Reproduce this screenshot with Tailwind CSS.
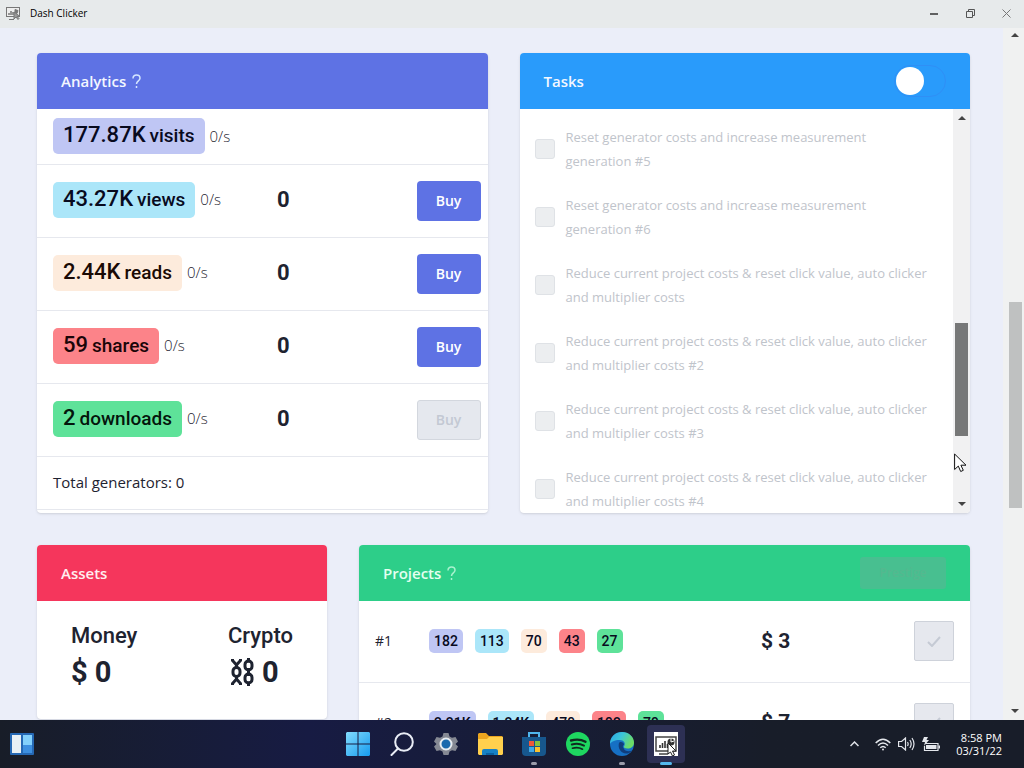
<!DOCTYPE html>
<html lang="en">
<head>
<meta charset="utf-8">
<meta name="viewport" content="width=device-width, initial-scale=1">
<title>Dash Clicker</title>
<script src="https://cdn.jsdelivr.net/npm/@tailwindcss/browser@4"></script>
</head>
<body class="flex h-screen flex-col overflow-hidden bg-[#ebeef9] font-['Open_Sans',sans-serif] text-[#1e2330]">

<!-- Window title bar -->
<header class="flex h-7 shrink-0 items-center bg-[#e7eaeb] pb-px pl-[6px]">
  <svg class="h-[13px] w-[15px]" viewBox="0 0 15 13" fill="none" stroke="#777" aria-hidden="true"><rect x=".5" y=".5" width="13" height="9" fill="#eee"/><path d="M3 8V6M5 8V4M7 8V5" stroke-width="1.5"/><path d="M3 12.5h5M9 2.500l3 1-1 3-2-1z" fill="#777"/><path d="M8 5v7l2-2 2 2.500 1-1-2-2h3z" fill="#999"/></svg>
  <h1 class="ml-[9px] text-[10px] text-black">Dash Clicker</h1>
  <div class="ml-auto flex">
    <button class="flex h-7 w-9 items-center justify-center" aria-label="Minimize"><svg width="10" height="10" viewBox="0 0 10 10" stroke="#333" stroke-width="1.500"><path d="M1 5h8"/></svg></button>
    <button class="flex h-7 w-9 items-center justify-center" aria-label="Restore"><svg width="9" height="9" viewBox="0 0 9 9" fill="none" stroke="#555"><path d="M.5 2.500h6v6h-6zM2.500 2.500v-2h6v6h-2"/></svg></button>
    <button class="flex h-7 w-9 items-center justify-center" aria-label="Close"><svg width="9" height="9" viewBox="0 0 9 9" stroke="#777"><path d="M.5.5l8 8M8.500.5l-8 8"/></svg></button>
  </div>
</header>

<div class="flex min-h-0 flex-1">
  <main class="min-w-0 flex-1 overflow-hidden pt-[25px] pr-[33px] pl-[37px]">
    <div class="grid grid-cols-2 gap-8">

      <section class="flex h-[460px] flex-col overflow-hidden rounded-[4px] bg-white shadow-sm">
        <h2 class="flex h-14 shrink-0 items-center gap-[6px] bg-[#5e72e4] px-6 text-[15px] font-semibold text-[#f3f7ff]">Analytics
          <svg width="9" height="15" viewBox="0 0 9 15" fill="none" stroke="#d5e6ff" stroke-width="1.500"><path d="M1 4.500C1 2.200 2.500 1 4.500 1S8 2.300 8 4.200C8 6.800 4.500 6.900 4.500 10M4.500 12v2"/></svg>
        </h2>
        <table class="w-full table-fixed border-collapse">
          <colgroup><col class="w-[240px]"><col><col class="w-[80px]"></colgroup>
          <tbody>
            <tr class="h-[55px] border-b border-[#e6e8ee]">
              <td class="pl-4"><div class="flex items-center gap-[5px]"><span class="flex h-9 items-baseline gap-1 rounded-[5px] bg-[#bfc6f4] px-[10px] font-['Roboto'] text-[22px] leading-[34px] font-medium text-[#080a1e]">177.87K <small class="text-[19px] leading-[34px]">visits</small></span><span class="text-[15px] font-light">0/s</span></div></td><td></td><td></td>
            </tr>
            <tr class="h-[73px] border-b border-[#e6e8ee]">
              <td class="pb-[2px] pl-4"><div class="flex items-center gap-[5px]"><span class="flex h-9 items-baseline gap-1 rounded-[5px] bg-[#abe6f9] px-[10px] font-['Roboto'] text-[22px] leading-[34px] font-medium text-[#080a1e]">43.27K <small class="text-[19px] leading-[34px]">views</small></span><span class="text-[15px] font-light">0/s</span></div></td>
              <td class="pb-[2px] font-['Roboto'] text-[22px] font-bold">0</td>
              <td class="pr-[7px] text-right"><button class="h-10 w-16 rounded-[4px] bg-[#5e72e4] text-sm font-semibold text-white">Buy</button></td>
            </tr>
            <tr class="h-[73px] border-b border-[#e6e8ee]">
              <td class="pb-[2px] pl-4"><div class="flex items-center gap-[5px]"><span class="flex h-9 items-baseline gap-1 rounded-[5px] bg-[#fdebdc] px-[10px] font-['Roboto'] text-[22px] leading-[34px] font-medium text-[#1a0a05]">2.44K <small class="text-[19px] leading-[34px]">reads</small></span><span class="text-[15px] font-light">0/s</span></div></td>
              <td class="pb-[2px] font-['Roboto'] text-[22px] font-bold">0</td>
              <td class="pr-[7px] text-right"><button class="h-10 w-16 rounded-[4px] bg-[#5e72e4] text-sm font-semibold text-white">Buy</button></td>
            </tr>
            <tr class="h-[73px] border-b border-[#e6e8ee]">
              <td class="pb-[2px] pl-4"><div class="flex items-center gap-[5px]"><span class="flex h-9 items-baseline gap-1 rounded-[5px] bg-[#fc8389] px-[10px] font-['Roboto'] text-[22px] leading-[34px] font-medium text-[#1a0508]">59 <small class="text-[19px] leading-[34px]">shares</small></span><span class="text-[15px] font-light">0/s</span></div></td>
              <td class="pb-[2px] font-['Roboto'] text-[22px] font-bold">0</td>
              <td class="pr-[7px] text-right"><button class="h-10 w-16 rounded-[4px] bg-[#5e72e4] text-sm font-semibold text-white">Buy</button></td>
            </tr>
            <tr class="h-[73px] border-b border-[#e6e8ee]">
              <td class="pb-[2px] pl-4"><div class="flex items-center gap-[5px]"><span class="flex h-9 items-baseline gap-1 rounded-[5px] bg-[#5ee299] px-[10px] font-['Roboto'] text-[22px] leading-[34px] font-medium text-[#04150c]">2 <small class="text-[19px] leading-[34px]">downloads</small></span><span class="text-[15px] font-light">0/s</span></div></td>
              <td class="pb-[2px] font-['Roboto'] text-[22px] font-bold">0</td>
              <td class="pr-[7px] text-right"><button disabled class="h-10 w-16 rounded-[3px] border border-[#d3d7de] bg-[#e5e8ee] text-sm font-semibold text-[#c3c8d3]">Buy</button></td>
            </tr>
            <tr class="h-[53px] border-b border-[#e6e8ee]"><td colspan="3" class="pl-4 text-[15px]">Total generators: 0</td></tr>
          </tbody>
        </table>
      </section>

      <section class="flex h-[460px] flex-col overflow-hidden rounded-[4px] bg-white shadow-sm">
        <div class="flex h-14 shrink-0 items-center justify-between bg-[#299bfb] px-6">
          <h2 class="text-[15px] font-semibold text-[#f3f7ff]">Tasks</h2>
          <input type="checkbox" role="switch" aria-label="Hide completed tasks" class="h-8 w-[52px] appearance-none rounded-full border border-[#2f8ff6] p-px before:block before:size-7 before:rounded-full before:bg-white before:content-['']">
        </div>
        <div class="flex min-h-0 flex-1">
          <ul class="flex min-w-0 flex-1 flex-col gap-5 overflow-hidden pt-4 pr-5 pl-[15px] text-[13px] leading-6 font-medium text-[#bfc4cb]">
            <li><label class="flex items-center gap-[11px]"><input type="checkbox" disabled class="size-5 shrink-0 appearance-none rounded-[3px] border border-[#dfe2e6] bg-[#eceef0]"><span>Reset generator costs and increase measurement generation #5</span></label></li>
            <li><label class="flex items-center gap-[11px]"><input type="checkbox" disabled class="size-5 shrink-0 appearance-none rounded-[3px] border border-[#dfe2e6] bg-[#eceef0]"><span>Reset generator costs and increase measurement generation #6</span></label></li>
            <li><label class="flex items-center gap-[11px]"><input type="checkbox" disabled class="size-5 shrink-0 appearance-none rounded-[3px] border border-[#dfe2e6] bg-[#eceef0]"><span>Reduce current project costs &amp; reset click value, auto clicker and multiplier costs</span></label></li>
            <li><label class="flex items-center gap-[11px]"><input type="checkbox" disabled class="size-5 shrink-0 appearance-none rounded-[3px] border border-[#dfe2e6] bg-[#eceef0]"><span>Reduce current project costs &amp; reset click value, auto clicker and multiplier costs #2</span></label></li>
            <li><label class="flex items-center gap-[11px]"><input type="checkbox" disabled class="size-5 shrink-0 appearance-none rounded-[3px] border border-[#dfe2e6] bg-[#eceef0]"><span>Reduce current project costs &amp; reset click value, auto clicker and multiplier costs #3</span></label></li>
            <li><label class="flex items-center gap-[11px]"><input type="checkbox" disabled class="size-5 shrink-0 appearance-none rounded-[3px] border border-[#dfe2e6] bg-[#eceef0]"><span>Reduce current project costs &amp; reset click value, auto clicker and multiplier costs #4</span></label></li>
          </ul>
          <div class="flex w-[17px] flex-col items-center bg-[#f1f1f2] py-[7px]" aria-hidden="true">
            <svg width="8" height="4" viewBox="0 0 8 4"><path d="M0 4l4-4 4 4z" fill="#444"/></svg>
            <div class="flex-[203]"></div><div class="w-[13px] flex-[113] bg-[#777878]"></div><div class="flex-[66]"></div>
            <svg width="8" height="4" viewBox="0 0 8 4"><path d="M0 0l4 4 4-4z" fill="#444"/></svg>
          </div>
        </div>
      </section>
    </div>

    <div class="mt-8 grid grid-cols-[290fr_611fr] gap-8">
      <section class="h-[174px] overflow-hidden rounded-[4px] bg-white shadow-sm">
        <h2 class="flex h-14 items-center bg-[#f5365c] px-6 text-[15px] font-semibold text-[#ffeef0]">Assets</h2>
        <div class="flex justify-between pt-[19px] pr-[34px] pl-[34px] font-['Roboto']">
          <div><h3 class="text-[22px] leading-8 font-medium">Money</h3><p class="text-[29px] leading-10 font-bold">$ 0</p></div>
          <div><h3 class="text-[22px] leading-8 font-medium">Crypto</h3>
            <p class="flex items-center gap-2 pl-[3px] text-[29px] leading-10 font-bold">
              <svg width="23" height="28" viewBox="0 0 23 28" fill="none" stroke="#1e2330" stroke-width="3" aria-hidden="true"><path d="M1.500 1v1.500L5.500 7l4-4.500V1M1.500 27v-1.500l4-4.500 4 4.500V27M5.500 5v5M5.500 18v5"/><rect x="2" y="9.500" width="7" height="9" rx="3.500"/><rect x="14" y="3" width="7" height="9" rx="3.500"/><rect x="14" y="16" width="7" height="9" rx="3.500"/><path d="M17.500 0v4.500M17.500 10v8M17.500 23.500V28"/></svg>0</p></div>
        </div>
      </section>

      <section class="overflow-hidden rounded-t-[4px] bg-white shadow-sm">
        <div class="flex h-14 items-center justify-between bg-[#2dce89] px-6">
          <h2 class="flex items-center gap-[6px] text-[15px] font-semibold text-[#e4fff0]">Projects
            <svg width="9" height="15" viewBox="0 0 9 15" fill="none" stroke="#a9f2cf" stroke-width="1.500"><path d="M1 4.500C1 2.200 2.500 1 4.500 1S8 2.300 8 4.200C8 6.800 4.500 6.900 4.500 10M4.500 12v2"/></svg>
          </h2>
          <button disabled class="h-8 w-[86px] rounded-[3px] bg-[#48bf90] text-xs font-semibold text-[#54b88f]">Prestige</button>
        </div>
        <table class="w-full table-fixed border-collapse">
          <colgroup><col class="w-[70px]"><col><col class="w-[153px]"><col class="w-[56px]"></colgroup>
          <tbody>
            <tr class="h-[81px] border-b border-[#e6e8ee]">
              <td class="pl-4 text-sm">#1</td>
              <td><div class="flex gap-3 font-['Roboto'] text-sm leading-6 font-medium text-[#080a1e]"><span class="rounded-[5px] bg-[#bfc6f4] px-[5px]">182</span><span class="rounded-[5px] bg-[#abe6f9] px-[5px]">113</span><span class="rounded-[5px] bg-[#fdebdc] px-[5px]">70</span><span class="rounded-[5px] bg-[#fc8389] px-[5px]">43</span><span class="rounded-[5px] bg-[#5ee299] px-[5px]">27</span></div></td>
              <td class="font-['Roboto'] text-[21px] font-bold">$ 3</td>
              <td><button disabled aria-label="Complete project 1" class="flex size-10 items-center justify-center rounded-[2px] border border-[#ced2da] bg-[#e6e8ee]"><svg width="14" height="11" viewBox="0 0 14 11" fill="none" stroke="#c5cad4" stroke-width="2"><path d="M1 6l4 4 8-9"/></svg></button></td>
            </tr>
            <tr class="h-[81px]">
              <td class="pl-4 text-sm">#2</td>
              <td><div class="flex gap-3 font-['Roboto'] text-sm leading-6 font-medium text-[#080a1e]"><span class="rounded-[5px] bg-[#bfc6f4] px-[5px]">2.21K</span><span class="rounded-[5px] bg-[#abe6f9] px-[5px]">1.24K</span><span class="rounded-[5px] bg-[#fdebdc] px-[5px]">479</span><span class="rounded-[5px] bg-[#fc8389] px-[5px]">192</span><span class="rounded-[5px] bg-[#5ee299] px-[5px]">79</span></div></td>
              <td class="font-['Roboto'] text-[21px] font-bold">$ 7</td>
              <td><button disabled aria-label="Complete project 2" class="flex size-10 items-center justify-center rounded-[2px] border border-[#ced2da] bg-[#e6e8ee]"><svg width="14" height="11" viewBox="0 0 14 11" fill="none" stroke="#c5cad4" stroke-width="2"><path d="M1 6l4 4 8-9"/></svg></button></td>
            </tr>
          </tbody>
        </table>
      </section>
    </div>
  </main>

  <!-- Page scrollbar -->
  <div class="flex w-[21px] flex-col items-end bg-[#f0f1f1] pt-[5px] pr-[2px] pb-[7px]" aria-hidden="true">
    <svg class="mr-[3px]" width="8" height="4" viewBox="0 0 8 4"><path d="M0 4l4-4 4 4z" fill="#444"/></svg>
    <div class="flex-[265]"></div><div class="w-[13px] flex-[206] bg-[#bfc1c1]"></div><div class="flex-[201]"></div>
    <svg class="mr-[3px]" width="8" height="4" viewBox="0 0 8 4"><path d="M0 0l4 4 4-4z" fill="#444"/></svg>
  </div>
</div>

<!-- Taskbar -->
<footer class="grid h-12 shrink-0 grid-cols-[1fr_auto_1fr] items-center bg-linear-to-r from-[#181d28] via-[#171b43] via-30% to-[#181d29] to-75%">
  <button class="ml-[10px] w-6" aria-label="Widgets"><svg width="24" height="22" viewBox="0 0 24 22"><rect width="24" height="22" rx="1" fill="#2568b4"/><rect x="2" y="2" width="9" height="18" fill="#e8f0f5"/><rect x="13" y="2" width="9" height="10" fill="#83d0fb"/><rect x="13" y="12" width="9" height="8" fill="#3d8fe0"/></svg></button>
  <nav class="flex gap-[6px]" aria-label="Apps">
    <button class="flex h-[38px] w-[38px] items-center justify-center" aria-label="Start"><svg width="24" height="24" viewBox="0 0 24 24"><defs><linearGradient id="win" x1="0" y1="0" x2="1" y2="1"><stop stop-color="#83dcfd"/><stop offset="1" stop-color="#169bef"/></linearGradient></defs><path d="M1 0h10.500v11.500H0V1zM12.500 0H23l1 1v10.500H12.500zM0 12.500h11.500V24H1l-1-1zM12.500 12.500H24V23l-1 1H12.500z" fill="url(#win)"/></svg></button>
    <button class="flex h-[38px] w-[38px] items-center justify-center" aria-label="Search"><svg width="24" height="24" viewBox="0 0 24 24" fill="none" stroke="#e9edf5" stroke-width="2" stroke-linecap="round"><circle cx="14" cy="10" r="8.800"/><path d="M8 16.500L1.500 23"/></svg></button>
    <button class="flex h-[38px] w-[38px] items-center justify-center" aria-label="Settings"><svg width="24" height="24" viewBox="0 0 24 24"><path d="M9.500 1h5l1 3.500 2.500 1.300L21.500 5 24 9.500 21.500 12 24 14.500 21.500 19l-3.500-.8-2.500 1.300-1 3.500h-5l-1-3.500L6 18.200 2.500 19 0 14.500 2.500 12 0 9.500 2.500 5 6 5.800l2.500-1.300z" fill="#858993"/><circle cx="12" cy="12" r="5.500" fill="#1a69ad" stroke="#e8edf1" stroke-width="2"/></svg></button>
    <button class="flex h-[38px] w-[38px] items-center justify-center" aria-label="File Explorer"><svg width="25" height="23" viewBox="0 0 25 23"><path d="M0 1l1-1h7l3 3h13l1 1v5H0z" fill="#eba51f"/><path d="M0 6h9l2-2h14v17l-1 1H1l-1-1z" fill="#ffd04d"/><path d="M4 22v-4q0-2 2-2h12q2 0 2 2v4z" fill="#1781c5"/><path d="M8 22v-2h8v2z" fill="#0b62a2"/></svg></button>
    <button class="relative flex h-[38px] w-[38px] items-center justify-center" aria-label="Microsoft Store"><svg width="24" height="24" viewBox="0 0 24 24"><path d="M7 6V1h10v5" fill="none" stroke="#50b6ee" stroke-width="2"/><path d="M0 5h24v15q0 4-4 4H4q-4 0-4-4z" fill="#17578d"/><path d="M7 9h5v5H7z" fill="#f0583a"/><path d="M13 9h5v5h-5z" fill="#83c341"/><path d="M7 15h5v5H7z" fill="#3fa9e8"/><path d="M13 15h5v5h-5z" fill="#fbc22f"/></svg><span class="absolute -bottom-0.5 h-[3px] w-1.5 rounded-full bg-[#9b9dab]"></span></button>
    <button class="flex h-[38px] w-[38px] items-center justify-center" aria-label="Spotify"><svg width="24" height="24" viewBox="0 0 24 24" fill="none" stroke="#102a20" stroke-linecap="round"><circle cx="12" cy="12" r="12" fill="#1ed760" stroke="none"/><path d="M5 8.500q8-2.300 14.500 1.200" stroke-width="2.400"/><path d="M5.800 12.500q6.500-1.900 12.200 1.100" stroke-width="2"/><path d="M6.500 16.200q5.500-1.500 10 1" stroke-width="1.700"/></svg></button>
    <button class="relative flex h-[38px] w-[38px] items-center justify-center" aria-label="Edge"><svg width="24" height="24" viewBox="0 0 24 24"><defs><linearGradient id="edge" x1="0" y1="0" x2="1" y2=".4"><stop stop-color="#2aa6e6"/><stop offset=".5" stop-color="#3cc5d8"/><stop offset="1" stop-color="#6cdc66"/></linearGradient></defs><circle cx="12" cy="12" r="12" fill="#1670c4"/><path d="M0 12C0 4.500 5.500 0 12 0c7 0 12 5 12 10.500 0 4-3 6-6.500 6-3 0-4.300-1.200-3.500-2.300 2-2.700 0-6.200-4.500-6.200C4.500 8 1 10 0 12z" fill="url(#edge)"/><path d="M9 11c-1.500 5 2 11 8 10.500 2-.2 4-1.500 5-3-3 1.500-7.500.8-8.500-2.500-1-1-1-2 .5-3.500C14 10 10 9 9 11z" fill="#103d7c"/></svg><span class="absolute -bottom-0.5 h-[3px] w-1.5 rounded-full bg-[#9b9dab]"></span></button>
    <button class="relative flex h-[38px] w-[38px] items-center justify-center rounded-[4px] bg-[#2d3054]" aria-label="Dash Clicker"><svg width="24" height="24" viewBox="0 0 24 24"><path d="M0 0h24v24H0z" fill="#fff"/><path d="M2 5h20v14H2zM5 22h9" fill="none" stroke="#444" stroke-width="1.500"/><path d="M6 16v-3M8.500 16v-5M11 16V9M13.500 16v-4" stroke="#333" stroke-width="1.600"/><circle cx="17" cy="10" r="3.500" fill="#333"/><path d="M17 10V6M17 10l3-1" stroke="#fff"/><path d="M14 11v11l2.500-2 2 4 2-1-2-4H22z" fill="#fff" stroke="#222"/></svg><span class="absolute -bottom-0.5 h-[3px] w-3 rounded-full bg-[#55b9ee]"></span></button>
  </nav>
  <div class="flex items-center justify-end pr-[22px] text-white">
    <button class="mr-4" aria-label="Show hidden icons"><svg width="9" height="6" viewBox="0 0 9 6" fill="none" stroke="#dfe2e8" stroke-width="1.500"><path d="M.5 5l4-4 4 4"/></svg></button>
    <button class="flex items-center gap-[7px]" aria-label="Network, volume and battery">
      <svg width="16" height="13" viewBox="0 0 16 13" fill="none" stroke="#e3e6eb" stroke-width="1.500"><path d="M.7 5q7.300-7.500 14.600 0M3 7.500q5-5 10 0M5.300 9.800q2.700-2.600 5.400 0"/><circle cx="8" cy="11.500" r="1" fill="#e3e6eb" stroke="none"/></svg>
      <svg width="17" height="14" viewBox="0 0 17 14" fill="none" stroke="#e3e6eb" stroke-width="1.200"><path d="M.6 4.500h3L7.500 1v12L3.600 9.500h-3zM9.500 5q1.300 2 0 4M11.800 3q2.800 4 0 8M14 1q4 6 0 12"/></svg>
      <svg width="18" height="15" viewBox="0 0 18 15"><path d="M3 6.500h13v7H2.500V9" fill="none" stroke="#e3e6eb" stroke-width="1.200"/><path d="M4 8h10.500v4H4zM16.500 8.500H18v3h-1.500zM2 0h4L4.500 3H7L2 9l1-4H0z" fill="#e3e6eb"/></svg>
    </button>
    <time class="ml-4 text-right text-[11px] leading-[13px]" datetime="2022-03-31T20:58">8:58 PM<br>03/31/22</time>
  </div>
</footer>

<!-- Mouse pointer -->
<svg class="pointer-events-none absolute top-[453px] left-[954px]" width="13" height="20" viewBox="0 0 13 20" aria-hidden="true"><path d="M.6 1v15.500l3.700-3.400 2.400 5.400 2.600-1.200-2.400-5.100H12z" fill="#fff" stroke="#111"/></svg>
</body>
</html>
